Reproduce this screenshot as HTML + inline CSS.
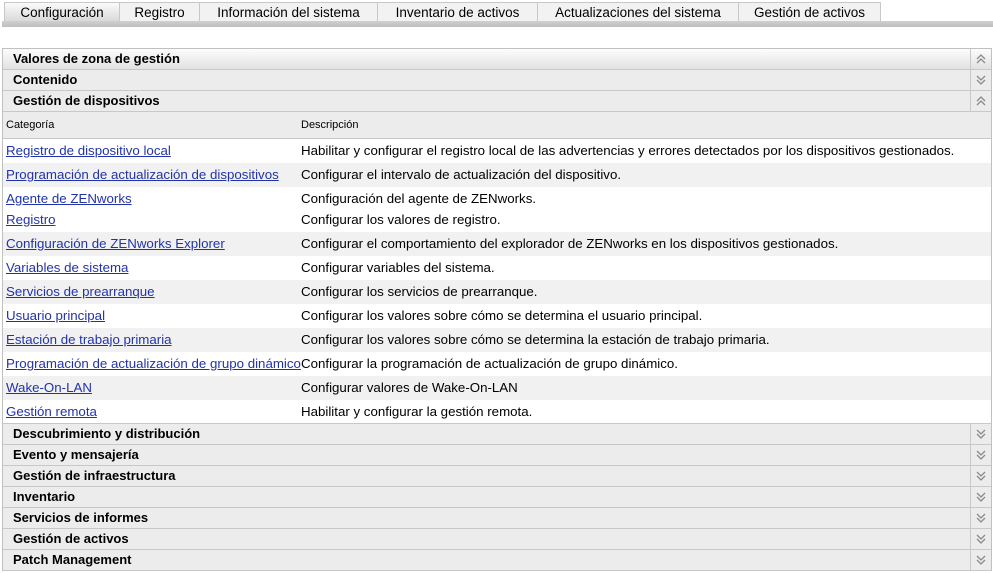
<!DOCTYPE html>
<html><head><meta charset="utf-8"><style>
*{margin:0;padding:0;box-sizing:border-box}
body{width:993px;height:573px;background:#fff;font-family:"Liberation Sans",sans-serif;font-size:13.3px;color:#000;position:relative;overflow:hidden}
.tabs{position:absolute;left:0;top:0;width:993px;height:28px}
.tab{position:absolute;top:2px;height:20px;border:1px solid #c8c8c8;border-bottom:none;background:#f2f2f2;font-size:13.5px;text-align:center;line-height:19px}
.tab.act{background:linear-gradient(#fafafa,#d8d8d8)}
.bar{position:absolute;left:2px;top:21px;width:991px;height:6px;background:linear-gradient(#cfcfcf,#bdbdbd)}
.panel{position:absolute;left:2px;top:48px;width:990px;border:1px solid #c0c0c0;border-bottom:none}
.sec{height:21px;border-bottom:1px solid #c8c8c8;background:#ececec;font-weight:bold;font-size:13px;line-height:20px;padding-left:10px;position:relative}
.sec.top{background:linear-gradient(#fcfcfc,#e2e2e2)}
.ic{position:absolute;right:0;top:0;width:21px;height:20px;border-left:1px solid #c8c8c8}
.ic svg{position:absolute;left:5px;top:5px}
.th{height:27px;background:#ececec;border-bottom:1px solid #c8c8c8;font-size:11px;position:relative}
.th span{position:absolute;top:7px}
.row{height:24px;position:relative}
.row.g{background:#f1f1f1}
.row a{position:absolute;left:3px;top:4px;color:#2233aa;text-decoration:underline}
.row span{position:absolute;left:298px;top:4px}
</style></head><body>
<svg width="0" height="0" style="position:absolute"><defs>
<symbol id="up" viewBox="0 0 10 10"><path d="M1 5L5 1L9 5M1 9L5 5L9 9" fill="none" stroke="#8a8a8a" stroke-width="1.3"/></symbol>
<symbol id="dn" viewBox="0 0 10 10"><path d="M1 1L5 5L9 1M1 5L5 9L9 5" fill="none" stroke="#8a8a8a" stroke-width="1.3"/></symbol>
</defs></svg>
<div class="tabs">
<div class="tab act" style="left:4px;width:116px">Configuración</div>
<div class="tab" style="left:119px;width:81px">Registro</div>
<div class="tab" style="left:199px;width:179px">Información del sistema</div>
<div class="tab" style="left:377px;width:161px">Inventario de activos</div>
<div class="tab" style="left:537px;width:202px">Actualizaciones del sistema</div>
<div class="tab" style="left:738px;width:143px">Gestión de activos</div>
<div class="bar"></div>
</div>
<div class="panel">
<div class="sec top">Valores de zona de gestión<div class="ic"><svg width="10" height="10"><use href="#up"/></svg></div></div>
<div class="sec">Contenido<div class="ic"><svg width="10" height="10"><use href="#dn"/></svg></div></div>
<div class="sec">Gestión de dispositivos<div class="ic"><svg width="10" height="10"><use href="#up"/></svg></div></div>
<div class="th"><span style="left:3px">Categoría</span><span style="left:298px">Descripción</span></div>
<div class="row"><a>Registro de dispositivo local</a><span>Habilitar y configurar el registro local de las advertencias y errores detectados por los dispositivos gestionados.</span></div>
<div class="row g"><a>Programación de actualización de dispositivos</a><span>Configurar el intervalo de actualización del dispositivo.</span></div>
<div class="row" style="height:45px"><a>Agente de ZENworks</a><span>Configuración del agente de ZENworks.</span><a style="top:25px">Registro</a><span style="top:25px">Configurar los valores de registro.</span></div>
<div class="row g"><a>Configuración de ZENworks Explorer</a><span>Configurar el comportamiento del explorador de ZENworks en los dispositivos gestionados.</span></div>
<div class="row"><a>Variables de sistema</a><span>Configurar variables del sistema.</span></div>
<div class="row g"><a>Servicios de prearranque</a><span>Configurar los servicios de prearranque.</span></div>
<div class="row"><a>Usuario principal</a><span>Configurar los valores sobre cómo se determina el usuario principal.</span></div>
<div class="row g"><a>Estación de trabajo primaria</a><span>Configurar los valores sobre cómo se determina la estación de trabajo primaria.</span></div>
<div class="row"><a>Programación de actualización de grupo dinámico</a><span>Configurar la programación de actualización de grupo dinámico.</span></div>
<div class="row g"><a>Wake-On-LAN</a><span>Configurar valores de Wake-On-LAN</span></div>
<div class="row" style="border-bottom:1px solid #c8c8c8"><a>Gestión remota</a><span>Habilitar y configurar la gestión remota.</span></div>
<div class="sec">Descubrimiento y distribución<div class="ic"><svg width="10" height="10"><use href="#dn"/></svg></div></div>
<div class="sec">Evento y mensajería<div class="ic"><svg width="10" height="10"><use href="#dn"/></svg></div></div>
<div class="sec">Gestión de infraestructura<div class="ic"><svg width="10" height="10"><use href="#dn"/></svg></div></div>
<div class="sec">Inventario<div class="ic"><svg width="10" height="10"><use href="#dn"/></svg></div></div>
<div class="sec">Servicios de informes<div class="ic"><svg width="10" height="10"><use href="#dn"/></svg></div></div>
<div class="sec">Gestión de activos<div class="ic"><svg width="10" height="10"><use href="#dn"/></svg></div></div>
<div class="sec">Patch Management<div class="ic"><svg width="10" height="10"><use href="#dn"/></svg></div></div>
</div>
</body></html>
